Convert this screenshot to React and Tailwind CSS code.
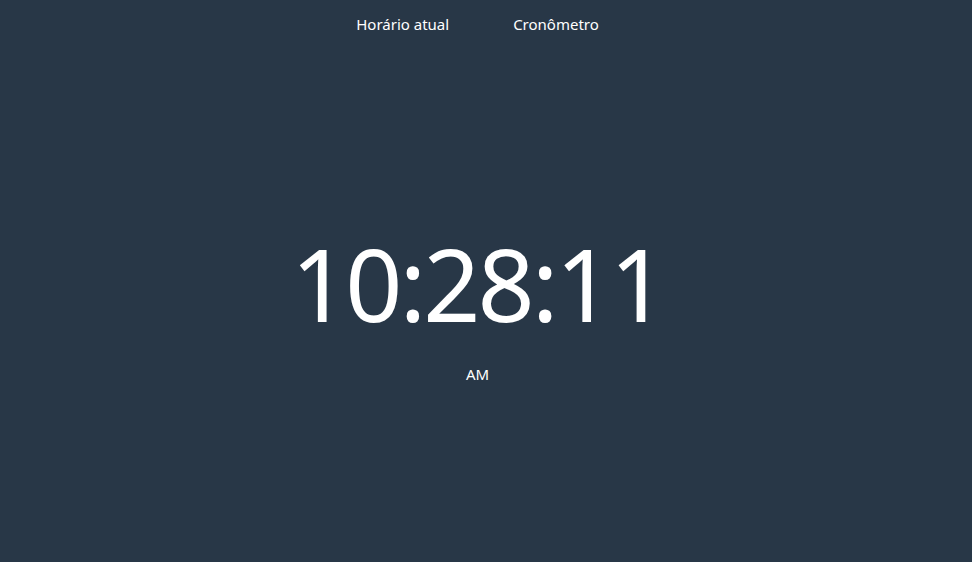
import { useState } from "react";

const App = () => {
  const [tab, setTab] = useState("clock");

  return (
    <div
      className="min-h-screen w-full bg-[#283747] text-white"
      style={{ fontFamily: "'Noto Sans', 'Open Sans', sans-serif" }}
    >
      <div className="w-[955px]">
        <nav className="flex justify-center gap-[64px] pt-[13px]">
          <button onClick={() => setTab("clock")} className="text-[15px] leading-[22px]">
            Horário atual
          </button>
          <button onClick={() => setTab("timer")} className="text-[15px] leading-[22px]">
            Cronômetro
          </button>
        </nav>

        <div className="flex flex-col items-center pt-[173px]">
          <div className="text-[100px] leading-[150px] tracking-[-3px]">10:28:11</div>
          <div className="mt-[5px] text-[15px] leading-[22px]">AM</div>
        </div>
      </div>
    </div>
  );
};

export default App;
